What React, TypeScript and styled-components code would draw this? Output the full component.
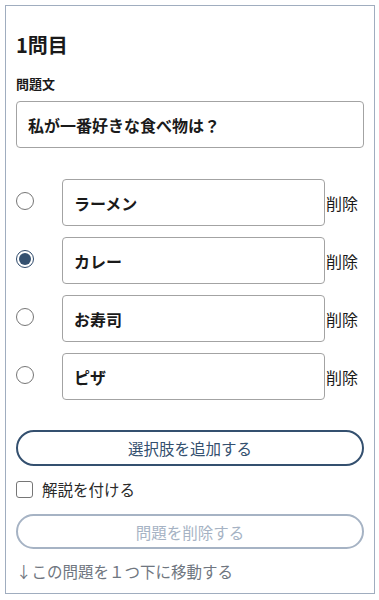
import React from "react";
import styled, { createGlobalStyle } from "styled-components";

const Global = createGlobalStyle`
  html, body { margin: 0; padding: 0; background: #fff; }
  body { font-family: "Noto Sans CJK JP", "Noto Sans", sans-serif; color: #1a1a1a; }
  * { box-sizing: border-box; }
`;

const Page = styled.div`
  padding: 5px 4px 5px 5px;
`;

const Card = styled.div`
  border: 1px solid #a0adbf;
  padding: 24px 10px 10px 10px;
  display: flex;
  flex-direction: column;
`;

const Title = styled.h2`
  margin: 0;
  font-size: 20px;
  font-weight: 700;
  line-height: 30px;
`;

const Label = styled.div`
  margin-top: 14px;
  font-size: 13px;
  font-weight: 700;
  line-height: 20px;
`;

const TextBox = styled.div`
  margin-top: 7px;
  height: 47px;
  border: 1px solid #a3a3a3;
  border-radius: 4px;
  padding: 0 11px;
  display: flex;
  align-items: center;
  font-size: 16px;
  font-weight: 700;
`;

const Choices = styled.div`
  margin-top: 31px;
  display: flex;
  flex-direction: column;
  gap: 11px;
`;

const ChoiceRow = styled.div`
  display: flex;
  align-items: center;
`;

const RadioCell = styled.div`
  width: 46px;
  display: flex;
  align-items: center;
  padding-bottom: 4px;
`;

const Radio = styled.span<{ $checked?: boolean }>`
  width: 18px;
  height: 18px;
  border-radius: 50%;
  border: 1px solid ${(p) => (p.$checked ? "#2f4a6b" : "#767676")};
  display: flex;
  align-items: center;
  justify-content: center;
  &::after {
    content: "";
    display: ${(p) => (p.$checked ? "block" : "none")};
    width: 12px;
    height: 12px;
    border-radius: 50%;
    background: #34506f;
  }
`;

const ChoiceBox = styled(TextBox)`
  margin-top: 0;
  width: 263px;
`;

const Remove = styled.span`
  font-size: 16px;
  margin-left: 1px;
  color: #1a1a1a;
`;

const PillButton = styled.button<{ $muted?: boolean }>`
  width: 100%;
  height: ${(p) => (p.$muted ? 35 : 36)}px;
  border-radius: 999px;
  border: 2px solid ${(p) => (p.$muted ? "#a6b3c4" : "#34506f")};
  background: #fff;
  color: ${(p) => (p.$muted ? "#a6b3c4" : "#34506f")};
  font-family: inherit;
  font-size: 15.5px;
  display: flex;
  align-items: center;
  justify-content: center;
  padding: 0;
`;

const AddWrap = styled.div`
  margin-top: 30px;
`;

const CheckRow = styled.label`
  margin-top: 12px;
  display: flex;
  align-items: center;
  gap: 9px;
  font-size: 15.5px;
  color: #2a2a2a;
  line-height: 22px;
`;

const Box = styled.span`
  width: 17px;
  height: 17px;
  border: 1px solid #767676;
  border-radius: 3px;
  background: #fff;
`;

const DelWrap = styled.div`
  margin-top: 14px;
`;

const MoveLink = styled.div`
  margin-top: 10px;
  font-size: 15.5px;
  color: #6f7680;
  line-height: 24px;
`;

const choices = [
  { label: "ラーメン", checked: false },
  { label: "カレー", checked: true },
  { label: "お寿司", checked: false },
  { label: "ピザ", checked: false },
];

export default function App() {
  return (
    <>
      <Global />
      <Page>
        <Card>
          <Title>1問目</Title>
          <Label>問題文</Label>
          <TextBox>私が一番好きな食べ物は？</TextBox>
          <Choices>
            {choices.map((c) => (
              <ChoiceRow key={c.label}>
                <RadioCell>
                  <Radio $checked={c.checked} />
                </RadioCell>
                <ChoiceBox>{c.label}</ChoiceBox>
                <Remove>削除</Remove>
              </ChoiceRow>
            ))}
          </Choices>
          <AddWrap>
            <PillButton>選択肢を追加する</PillButton>
          </AddWrap>
          <CheckRow>
            <Box />
            解説を付ける
          </CheckRow>
          <DelWrap>
            <PillButton $muted>問題を削除する</PillButton>
          </DelWrap>
          <MoveLink>↓この問題を１つ下に移動する</MoveLink>
        </Card>
      </Page>
    </>
  );
}
